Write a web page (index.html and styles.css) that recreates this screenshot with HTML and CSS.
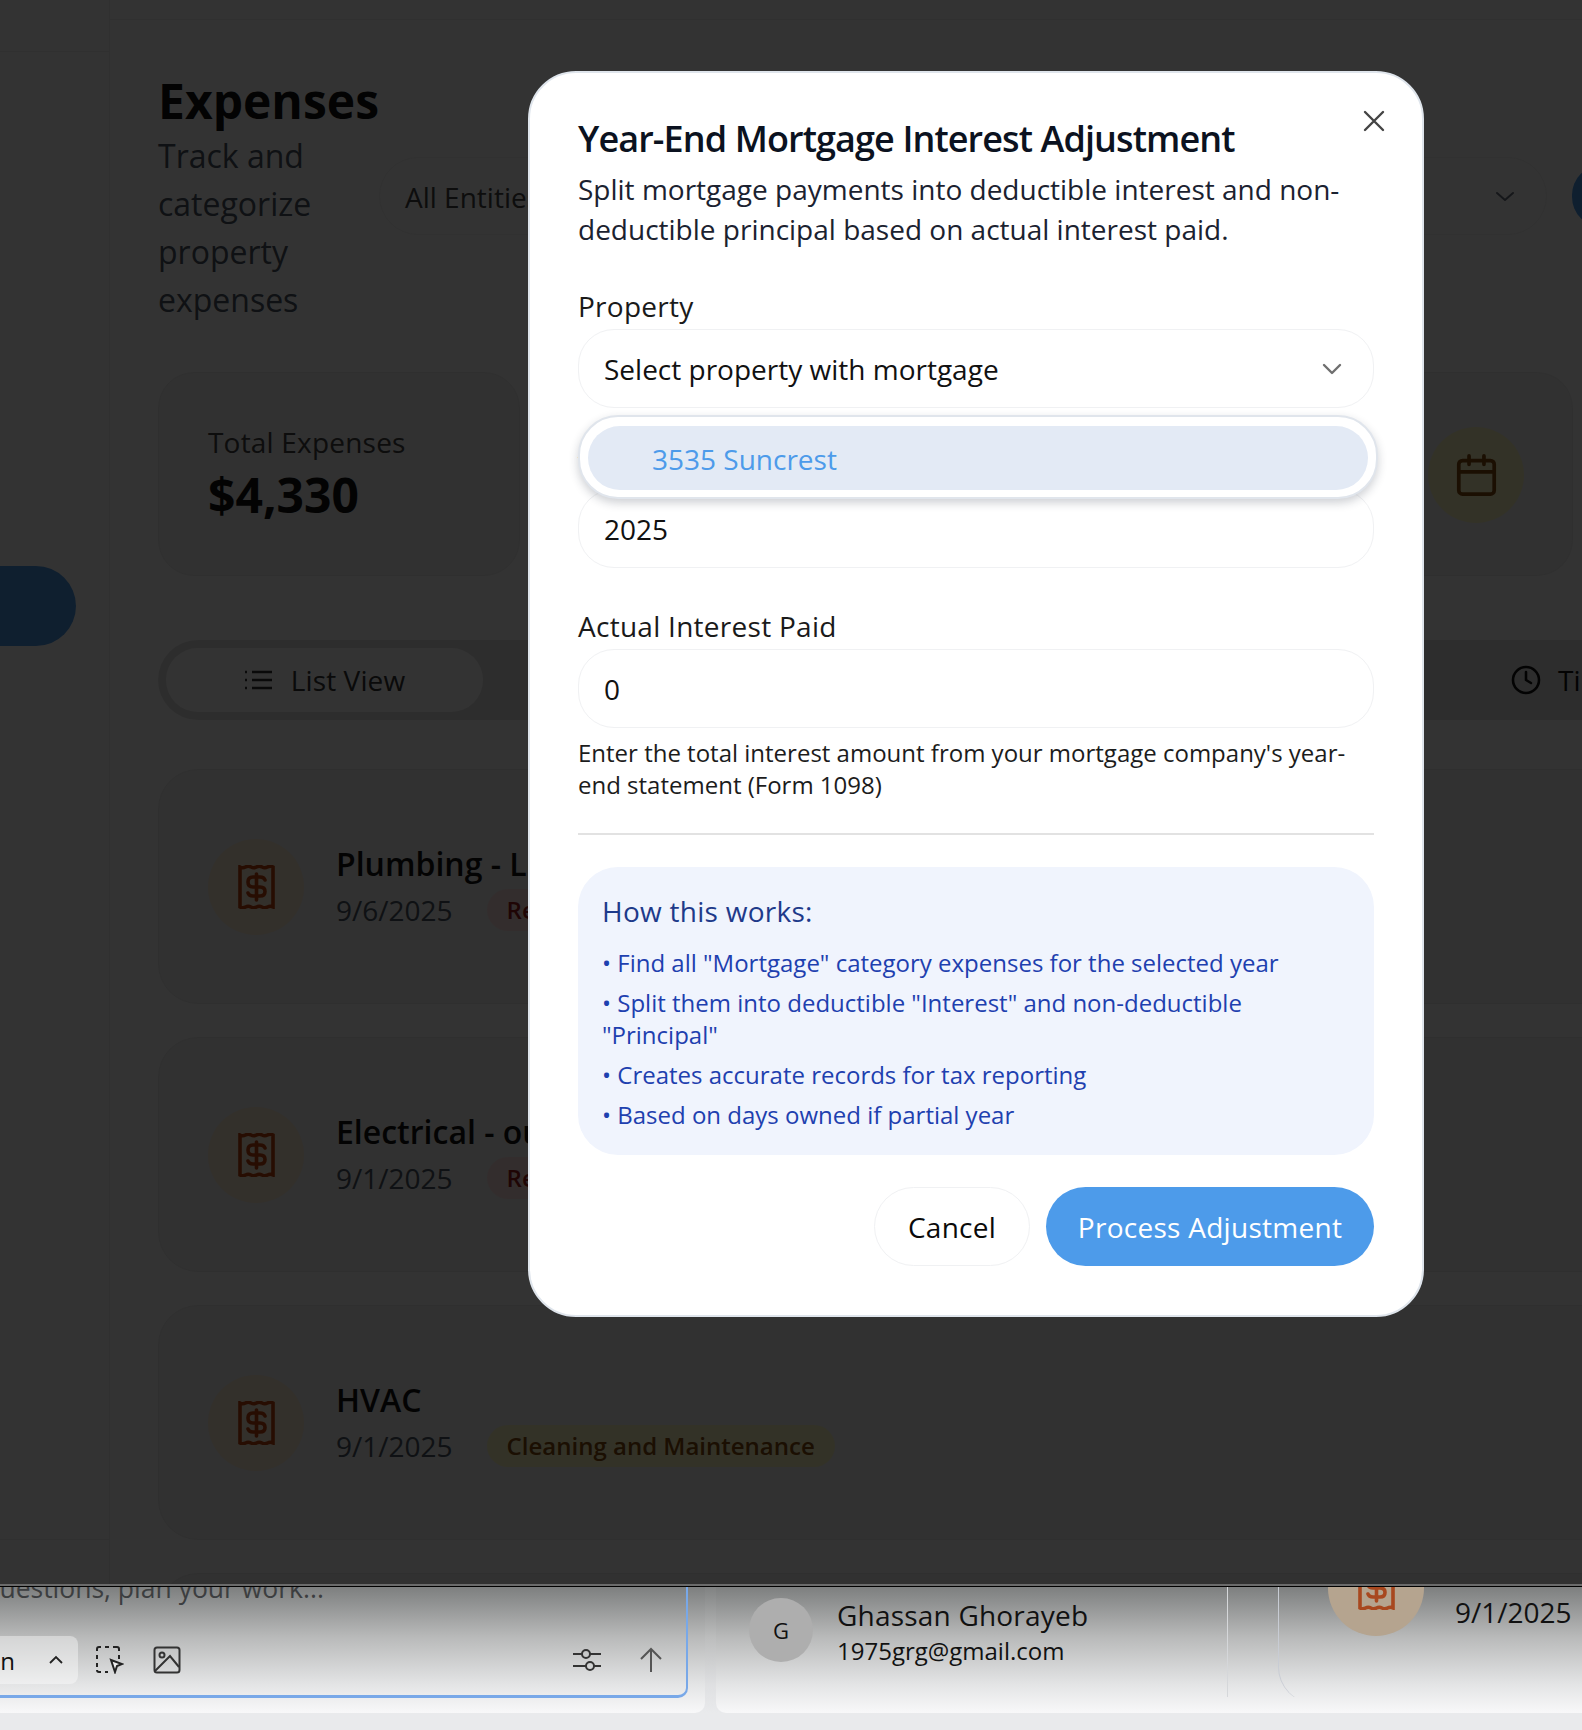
FILE: index.html
```html
<!DOCTYPE html>
<html lang="en">
<head>
    <meta charset="UTF-8">
    <title>Expenses</title>
    <link rel="stylesheet" href="styles.css">
</head>
<body>

<div class="app">
    <aside class="sidebar">
        <div class="side-head"></div>
        <div class="side-active"></div>
        <div class="side-foot"></div>
    </aside>
    <main class="main">
        <div class="page-head">
            <div class="page-title">
                <h1>Expenses</h1>
                <p>Track and categorize property expenses</p>
            </div>
            <div class="filter">
                <span>All Entities</span>
                <svg width="24" height="24" viewBox="0 0 24 24" fill="none" stroke="#6b7280" stroke-width="2" stroke-linecap="round" stroke-linejoin="round"><path d="M4 8l8 7 8-7"/></svg>
            </div>
            <div class="add-btn"></div>
        </div>

        <div class="stats">
            <div class="stat-card">
                <div class="stat-label">Total Expenses</div>
                <div class="stat-value">$4,330</div>
            </div>
            <div class="stat-card stat-right">
                <div class="icon-circle yellow">
                    <svg width="41" height="45" viewBox="0 0 44 48" fill="none" stroke="#854d0e" stroke-width="4" stroke-linecap="round" stroke-linejoin="round"><rect x="3" y="8" width="38" height="36" rx="4"/><path d="M3 20h38M14 3v9M30 3v9"/></svg>
                </div>
            </div>
        </div>

        <div class="tabs">
            <div class="tab active">
                <svg width="28" height="22" viewBox="0 0 28 22" fill="none" stroke="#333" stroke-width="2.4"><path d="M8 3h20M8 11h20M8 19h20"/><path d="M1 3h2M1 11h2M1 19h2"/></svg>
                <span>List View</span>
            </div>
            <div class="tab last">
                <svg width="30" height="30" viewBox="0 0 30 30" fill="none" stroke="#111" stroke-width="2.6" stroke-linecap="round" stroke-linejoin="round"><circle cx="15" cy="15" r="13"/><path d="M15 7v8l5 3"/></svg>
                <span>Timeline</span>
            </div>
        </div>

        <div class="expense">
            <div class="icon-circle">
                <svg class="receipt" viewBox="0 0 37 44" width="37" height="44"><use href="#receipt"/></svg>
            </div>
            <div>
                <div class="expense-name">Plumbing - Leak repair</div>
                <div class="expense-meta"><span>9/6/2025</span><span class="badge red">Repairs</span></div>
            </div>
        </div>
        <div class="expense">
            <div class="icon-circle">
                <svg class="receipt" viewBox="0 0 37 44" width="37" height="44"><use href="#receipt"/></svg>
            </div>
            <div>
                <div class="expense-name">Electrical - outlets</div>
                <div class="expense-meta"><span>9/1/2025</span><span class="badge red">Repairs</span></div>
            </div>
        </div>
        <div class="expense">
            <div class="icon-circle">
                <svg class="receipt" viewBox="0 0 37 44" width="37" height="44"><use href="#receipt"/></svg>
            </div>
            <div>
                <div class="expense-name">HVAC</div>
                <div class="expense-meta"><span>9/1/2025</span><span class="badge olive">Cleaning and Maintenance</span></div>
            </div>
        </div>
        <div class="expense"></div>
    </main>

    <div class="dim"></div>

    <div class="modal">
        <svg class="modal-close" width="22" height="22" viewBox="0 0 22 22" fill="none" stroke="#444" stroke-width="2.4" stroke-linecap="round"><path d="M2 2l18 18M20 2L2 20"/></svg>
        <h2>Year-End Mortgage Interest Adjustment</h2>
        <p class="modal-desc">Split mortgage payments into deductible interest and non-deductible principal based on actual interest paid.</p>

        <div class="field">
            <label>Property</label>
            <div class="input select">
                <span>Select property with mortgage</span>
                <svg width="22" height="22" viewBox="0 0 22 22" fill="none" stroke="#6f6f6f" stroke-width="2.4" stroke-linecap="round" stroke-linejoin="round"><path d="M3 7l8 8 8-8"/></svg>
            </div>
            <div class="dropdown">
                <div class="option">3535 Suncrest</div>
            </div>
        </div>
        <div class="field">
            <label>Year</label>
            <div class="input">2025</div>
        </div>
        <div class="field field-last">
            <label>Actual Interest Paid</label>
            <div class="input">0</div>
            <p class="help">Enter the total interest amount from your mortgage company's year-end statement (Form 1098)</p>
        </div>

        <div class="info">
            <h3>How this works:</h3>
            <ul>
                <li>• Find all "Mortgage" category expenses for the selected year</li>
                <li>• Split them into deductible "Interest" and non-deductible "Principal"</li>
                <li>• Creates accurate records for tax reporting</li>
                <li>• Based on days owned if partial year</li>
            </ul>
        </div>

        <div class="modal-actions">
            <button class="btn-cancel">Cancel</button>
            <button class="btn-primary">Process Adjustment</button>
        </div>
    </div>
</div>

<div class="strip">
    <div class="chat-panel">
        <div class="chat-box">
            <div class="chat-text">Ask questions, plan your work...</div>
            <div class="chat-tools">
                <div class="mode-pill">
                    <span>Plan</span>
                    <svg width="16" height="10" viewBox="0 0 16 10" fill="none" stroke="#222" stroke-width="1.8"><path d="M2 8l6-6 6 6"/></svg>
                </div>
                <svg width="28" height="28" viewBox="0 0 28 28" fill="none" stroke="#222" stroke-width="2"><path d="M1 5V3a2 2 0 0 1 2-2h2M9 1h4M17 1h4a2 2 0 0 1 2 2v2M23 9v4M1 9v4M1 17v4M1 24a2 2 0 0 0 2 2h2M9 26h3"/><path d="M15 14l11 4-5 2-2 6z" fill="#eee"/></svg>
                <svg class="tool-image" width="28" height="28" viewBox="0 0 28 28" fill="none" stroke="#333" stroke-width="2"><rect x="1.500" y="1.500" width="25" height="25" rx="2.500"/><circle cx="9" cy="9" r="2.500"/><path d="M2 25l15-15 9 11"/></svg>
                <div class="tools-right">
                    <svg width="28" height="24" viewBox="0 0 28 24" fill="none" stroke="#333" stroke-width="2"><path d="M0 6h9M17 6h11M0 18h13M21 18h7"/><circle cx="13" cy="6" r="4"/><circle cx="17" cy="18" r="4"/></svg>
                    <svg width="24" height="26" viewBox="0 0 24 26" fill="none" stroke="#555" stroke-width="2"><path d="M12 25V2M2 12L12 2l10 10"/></svg>
                </div>
            </div>
        </div>
    </div>
    <div class="user-panel">
        <div class="user">
            <div class="avatar">G</div>
            <div>
                <div class="user-name">Ghassan Ghorayeb</div>
                <div class="user-mail">1975grg@gmail.com</div>
            </div>
        </div>
        <div class="peek">
            <div class="peek-card">
                <div class="peek-circle">
                    <svg viewBox="0 0 37 44" width="37" height="44"><use href="#receipt"/></svg>
                </div>
                <span class="peek-date">9/1/2025</span>
            </div>
        </div>
    </div>
</div>

<svg class="defs" width="0" height="0">
    <symbol id="receipt" viewBox="0 0 37 44">
        <path d="M2 2q2.800 1.400 5.500 0t5.500 0 5.500 0 5.500 0 5.500 0 5.500 0v40q-2.800-1.400-5.500 0t-5.500 0-5.500 0-5.500 0-5.500 0-5.500 0z" fill="none" stroke="currentColor" stroke-width="3.600"/>
        <path d="M27 15q-1-3-5-3h-7q-5 0-5 5t5 5h7q5 0 5 4.500t-5 4.500h-7q-4 0-5-3M18.500 9v26" fill="none" stroke="currentColor" stroke-width="3.600" stroke-linecap="round"/>
    </symbol>
</svg>

</body>
</html>
```

FILE: styles.css
```css
* {
    box-sizing: border-box;
}
html, body {
    margin: 0;
    height: 1730px;
    overflow: hidden;
}
body {
    font-family: "Open Sans", sans-serif;
    background: #e9eaec;
    color: #111;
}
h1, h2, h3, p, ul {
    margin: 0;
    padding: 0;
}
.defs {
    display: block;
}

/* page behind the dialog */
.app {
    position: relative;
    display: flex;
    height: 1587px;
    background: #fff;
    border-bottom: 1px solid #000;
    overflow: hidden;
}
.dim {
    position: absolute;
    inset: 0;
    background: rgba(0, 0, 0, 0.8);
    border-bottom: 2px solid #6b6b6b;
}
.sidebar {
    flex: 0 0 110px;
    display: flex;
    flex-direction: column;
    border-right: 1px solid #eee;
}
.side-head {
    height: 52px;
    margin-bottom: 514px;
    border-bottom: 1px solid #f0f0f0;
}
.side-active {
    width: 76px;
    height: 80px;
    background: #4d9bea;
    border-radius: 0 40px 40px 0;
}
.side-foot {
    margin-top: auto;
    height: 47px;
    border-top: 1px solid #f0f0f0;
}
.main {
    flex: 0 0 1500px;
    margin-top: 19px;
    padding: 70px 0 0 48px;
    border-top: 1px solid #eee;
    min-width: 0;
}
.page-head {
    display: flex;
    height: 282px;
    width: 1500px;
}
.page-title {
    flex: 0 0 220px;
    margin-top: -20px;
}
.page-title h1 {
    font-size: 48px;
    line-height: 62px;
    font-weight: 700;
}
.page-title p {
    font-size: 32px;
    line-height: 48px;
    color: #4b5563;
}
.filter {
    flex: 0 0 1168px;
    height: 78px;
    margin-top: 67px;
    padding: 2px 29px 0 25px;
    display: flex;
    align-items: center;
    justify-content: space-between;
    border: 1px solid #f2f2f2;
    border-radius: 39px;
    font-size: 28px;
    color: #444;
}
.add-btn {
    flex: 0 0 60px;
    height: 62px;
    margin: 75px 0 0 25px;
    background: #4d9bea;
    border-radius: 31px;
}
.stats {
    display: flex;
    justify-content: space-between;
    width: 1415px;
    height: 204px;
}
.stat-card {
    flex: 0 0 362px;
    padding: 47px 49px;
    background: #f3f3f3;
    border: 1px solid #ececec;
    border-radius: 36px;
}
.stat-right {
    flex-basis: 200px;
    padding: 54px 0 0 0;
    border-left: none;
    border-radius: 0 36px 36px 0;
}
.stat-right .icon-circle {
    margin-left: 55px;
}
.stat-label {
    font-size: 28px;
    line-height: 44px;
    letter-spacing: 0.2px;
    color: #444;
}
.stat-value {
    margin-top: 1px;
    font-size: 48px;
    line-height: 60px;
    font-weight: 700;
}
.tabs {
    display: flex;
    align-items: center;
    justify-content: space-between;
    width: 1500px;
    height: 80px;
    margin: 64px 0 49px;
    padding-left: 8px;
    background: #e2e2e2;
    border-radius: 40px;
}
.tab {
    display: flex;
    align-items: center;
    justify-content: center;
    gap: 19px;
    width: 317px;
    height: 64px;
    font-size: 28px;
    letter-spacing: 0.1px;
    color: #333;
}
.tab.active {
    background: #fff;
    border-radius: 32px;
}
.tab.last {
    width: auto;
    margin-right: -12px;
    gap: 17px;
    color: #111;
}
.expense {
    display: flex;
    align-items: center;
    gap: 32px;
    flex: none;
    height: 235px;
    margin-bottom: 33px;
    padding-left: 49px;
    width: 1500px;
    background: #f3f3f3;
    border: 1px solid #ececec;
    border-radius: 40px;
}
.icon-circle {
    flex: none;
    display: flex;
    align-items: center;
    justify-content: center;
    width: 96px;
    height: 96px;
    border-radius: 50%;
    background: #ffedd5;
}
.icon-circle.yellow {
    background: #fef9c3;
}
.receipt {
    color: #c2410c;
}
.expense-name {
    margin-top: 2px;
    font-size: 32px;
    line-height: 44px;
    font-weight: 600;
}
.expense-meta {
    display: flex;
    align-items: center;
    gap: 34px;
    margin-top: 1px;
    font-size: 28px;
    line-height: 46px;
    color: #4b5563;
}
.badge {
    padding: 0 20px;
    border-radius: 22px;
    font-size: 24px;
    line-height: 42px;
    font-weight: 600;
}
.badge.red {
    background: #fee2e2;
    color: #991b1b;
}
.badge.olive {
    background: #fef9c3;
    color: #854d0e;
}

/* dialog */
.modal {
    position: absolute;
    left: 528px;
    top: 71px;
    width: 896px;
    height: 1246px;
    padding: 44px 48px 0;
    background: #fff;
    border: 2px solid #dfe5ec;
    border-radius: 48px;
}
.modal-close {
    position: absolute;
    right: 37px;
    top: 37px;
}
.modal h2 {
    font-size: 36px;
    line-height: 44px;
    font-weight: 600;
    letter-spacing: -0.9px;
    color: #0b1220;
}
.modal-desc {
    margin-top: 8px;
    font-size: 28px;
    line-height: 40px;
    color: #1b2230;
}
.field {
    position: relative;
    margin-top: 38px;
}
.modal-desc + .field {
    margin-top: 37px;
}
.field label {
    display: block;
    font-size: 28px;
    line-height: 40px;
    font-weight: 500;
    letter-spacing: 0.27px;
    color: #1a1a1a;
}
.input {
    display: flex;
    align-items: center;
    justify-content: space-between;
    height: 79px;
    margin-top: 3px;
    padding: 0 25px;
    border: 1px solid #f0f1f3;
    border-radius: 36px;
    font-size: 28px;
}
.select svg {
    margin-right: 5px;
}
.dropdown {
    position: absolute;
    left: 0;
    top: 129px;
    width: 800px;
    height: 84px;
    padding: 9px 8px;
    background: #fff;
    border: 2px solid #e0e5ec;
    border-radius: 40px;
    box-shadow: 0 4px 10px rgba(30, 40, 60, 0.22);
    z-index: 2;
}
.option {
    height: 64px;
    padding-left: 64px;
    background: #e3eaf5;
    border-radius: 32px;
    font-size: 28px;
    line-height: 66px;
    color: #4d9bea;
}
.help {
    margin-top: 9px;
    font-size: 24px;
    line-height: 32px;
    color: #1c1c1c;
}
.field-last {
    padding-bottom: 32px;
    border-bottom: 2px solid #e2e2e2;
}
.info {
    height: 288px;
    margin-top: 32px;
    padding: 23px 24px 0;
    background: #f0f4fd;
    border-radius: 40px;
}
.info h3 {
    font-size: 28px;
    line-height: 42px;
    font-weight: 500;
    letter-spacing: 0.27px;
    color: #1e3a8a;
}
.info ul {
    margin-top: 15px;
    list-style: none;
}
.info li {
    margin-bottom: 8px;
    font-size: 24px;
    line-height: 32px;
    color: #1e40af;
}
.modal-actions {
    display: flex;
    justify-content: flex-end;
    gap: 16px;
    margin-top: 32px;
}
.modal-actions button {
    height: 79px;
    border-radius: 40px;
    font-family: inherit;
    font-size: 28px;
    font-weight: 500;
    letter-spacing: 0.27px;
}
.btn-cancel {
    width: 156px;
    background: #fff;
    border: 1px solid #f0f1f3;
    color: #0a0a0a;
}
.btn-primary {
    width: 328px;
    background: #4d9bea;
    border: none;
    color: #fff;
}

/* windows peeking out under the dialog backdrop */
.strip {
    display: flex;
    gap: 11px;
    height: 126px;
    background: linear-gradient(#808282, #bcbdbd 40%, #dfe0e2 78%, #e9eaec);
}
.chat-panel, .user-panel {
    background: linear-gradient(#7d7f7f, #b9baba 40%, #e4e5e6 78%, #f8f8f9);
}
.chat-panel {
    flex: 0 0 705px;
    padding-right: 17px;
    border-radius: 0 0 10px 0;
}
.chat-box {
    height: 114px;
    margin-top: -3px;
    border-right: 2px solid #78a8e8;
    border-bottom: 3px solid #78a8e8;
    border-radius: 0 0 10px 0;
    overflow: hidden;
}
.chat-text {
    margin: -16px 0 0 -67px;
    font-size: 26.5px;
    line-height: 40px;
    color: #3c3e40;
    white-space: nowrap;
}
.chat-tools {
    display: flex;
    align-items: center;
    gap: 18px;
    margin-top: 28px;
    padding-right: 23px;
}
.mode-pill {
    flex: none;
    display: flex;
    align-items: center;
    justify-content: flex-end;
    gap: 33px;
    width: 78px;
    height: 48px;
    padding-right: 14px;
    background: rgba(255, 255, 255, 0.4);
    border-radius: 0 8px 8px 0;
    font-size: 24px;
    overflow: hidden;
}
.mode-pill svg {
    flex: none;
}
.tool-image {
    margin-left: 11px;
}
.tools-right {
    display: flex;
    align-items: center;
    gap: 38px;
    margin-left: auto;
}
.user-panel {
    flex: 1;
    display: flex;
    min-width: 0;
    border-radius: 0 0 0 10px;
}
.user {
    flex: 0 0 512px;
    display: flex;
    gap: 24px;
    height: 110px;
    padding: 11px 0 0 33px;
    border-right: 1px solid #d5d7da;
}
.avatar {
    flex: none;
    width: 64px;
    height: 64px;
    line-height: 64px;
    text-align: center;
    border-radius: 50%;
    background: #aeaeae;
    font-size: 22px;
}
.user-name {
    margin-top: -2px;
    font-size: 28px;
    line-height: 38px;
    letter-spacing: 0.2px;
}
.user-mail {
    font-size: 24px;
    line-height: 34px;
}
.peek {
    flex: 1;
    height: 110px;
    padding-left: 50px;
    overflow: hidden;
}
.peek-card {
    display: flex;
    gap: 31px;
    height: 163px;
    margin-top: -47px;
    padding-left: 49px;
    border-left: 1px solid #c8ccd4;
    border-radius: 0 0 0 36px;
}
.peek-circle {
    flex: none;
    display: flex;
    justify-content: center;
    align-items: center;
    width: 96px;
    height: 96px;
    border-radius: 50%;
    background: #b5a48f;
    color: #a8481f;
}
.peek-date {
    padding-top: 53px;
    font-size: 28px;
    line-height: 38px;
}
```
